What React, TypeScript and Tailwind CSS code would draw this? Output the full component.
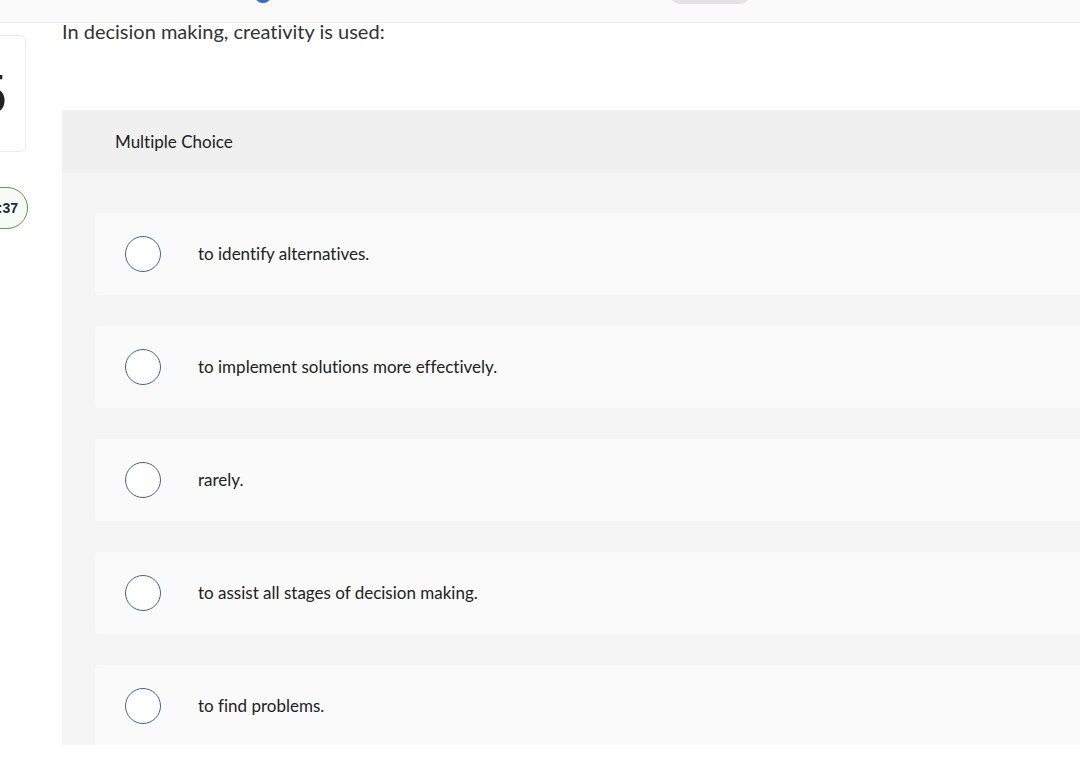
import React from "react";

const options = [
  "to identify alternatives.",
  "to implement solutions more effectively.",
  "rarely.",
  "to assist all stages of decision making.",
  "to find problems.",
];

export default function App() {
  return (
    <div
      className="relative w-[1080px] h-[765px] overflow-hidden bg-white text-[#333] [font-variant-ligatures:none]"
      style={{ fontFamily: "Lato, 'Open Sans', Arial, sans-serif" }}
    >
      {/* top bar */}
      <div className="relative h-[23px] bg-[#fafafa] border-b border-[#ececec]">
        <div className="absolute left-[255px] top-[-12px] w-[16px] h-[15px] rounded-full bg-[#2f6fc8]" />
        <div className="absolute left-[670px] top-[-20px] w-[80px] h-[24px] rounded-[10px] bg-[#e4e2e6]" />
      </div>

      <div className="flex">
        {/* left column */}
        <div className="w-[62px] shrink-0 relative">
          <div className="absolute left-[-74px] top-[12px] w-[100px] h-[117px] rounded-[6px] border border-[#ececec] bg-white flex items-center justify-end pr-[18px]">
            <span className="text-[56px] leading-none text-[#222]" style={{ fontFamily: "'Liberation Sans', Arial, sans-serif" }}>5</span>
          </div>
          <div className="absolute left-[-40px] top-[164px] w-[68px] h-[42px] rounded-full border border-[#5b9a4c] bg-[#f7faf5] flex items-center justify-end pr-[9px]">
            <span className="text-[14px] font-bold text-[#1d2a3a]" style={{ fontFamily: "'Liberation Sans', Arial, sans-serif" }}>:37</span>
          </div>
        </div>

        {/* main */}
        <div className="flex-1">
          <h1 className="text-[20px] leading-[20px] mt-[-2px] text-[#333]">
            In decision making, creativity is used:
          </h1>

          <div className="mt-[69px] w-[1100px] h-[635px] overflow-hidden bg-[#f5f5f5]">
            <div className="h-[63px] bg-[#f0f0f0] flex items-center pl-[53px]">
              <span className="text-[17px] text-[#222]">Multiple Choice</span>
            </div>
            <div className="pt-[40px] pl-[33px] flex flex-col gap-[31px]">
              {options.map((o) => (
                <div
                  key={o}
                  className="h-[82px] shrink-0 rounded-[4px] bg-[#fafafa] flex items-center pl-[30px]"
                >
                  <div className="w-[36px] h-[36px] rounded-full border-[1.5px] border-[#3a6896] bg-white shrink-0" />
                  <span className="ml-[37px] text-[17px] text-[#222]">{o}</span>
                </div>
              ))}
            </div>
          </div>
        </div>
      </div>
    </div>
  );
}
